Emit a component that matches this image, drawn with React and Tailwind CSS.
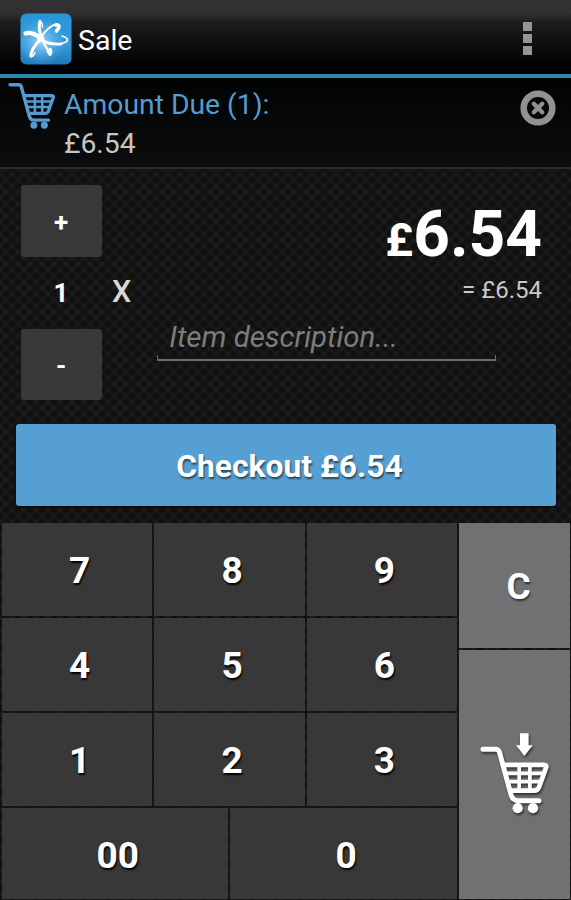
import React, { useState } from "react";

const DIGITS = ["7", "8", "9", "4", "5", "6", "1", "2", "3"];

function Cart({ className, arrow }) {
  return (
    <svg
      viewBox="480 732 70 83"
      className={className}
      fill="none"
      stroke="currentColor"
      strokeLinecap="round"
      strokeLinejoin="round"
    >
      <path
        d="M483 749.2h12.5q3 0 4 3l11.5 42.5q1.6 6 7 6h21"
        strokeWidth="5"
      />
      <path d="M504 764.8h40q3 0 2 3l-7 19.5q-1.2 3.4-5 3.4h-23" strokeWidth="4.8" />
      <path d="M507 773.4h36M509 781.6h32M519.2 766v24M529.9 766v24" strokeWidth="3.7" />
      <circle cx="517.7" cy="808.2" r="5.1" fill="currentColor" stroke="none" />
      <circle cx="533" cy="808.2" r="5.1" fill="currentColor" stroke="none" />
      {arrow && (
        <path
          d="M520 733.3h8.6v11.9h4.1L524.4 756l-8.4-10.8h4z"
          fill="currentColor"
          stroke="none"
        />
      )}
    </svg>
  );
}

function Logo() {
  return (
    <svg viewBox="0 0 52 52" className="h-[52px] w-[52px]">
      <defs>
        <linearGradient id="sky" x1="0" y1="0" x2="0" y2="1">
          <stop offset="0" stopColor="#2596d6" />
          <stop offset="0.6" stopColor="#3a9bdc" />
          <stop offset="1" stopColor="#1c78b8" />
        </linearGradient>
        <radialGradient id="glow" cx="0.4" cy="0.55" r="0.48">
          <stop offset="0" stopColor="#a3d3f3" />
          <stop offset="1" stopColor="#4fb0e8" stopOpacity="0" />
        </radialGradient>
      </defs>
      <rect x="0.5" y="0.5" width="51" height="51" rx="6" fill="url(#sky)" />
      <rect x="0.5" y="0.5" width="51" height="51" rx="6" fill="url(#glow)" />
      <g fill="none" stroke="#fff" strokeLinecap="round" strokeLinejoin="round">
        <path d="M5.5 20.5C10 18.5 15 21 21 25" strokeWidth="4.2" />
        <path d="M21 27C29 33 40 32 46 29C49 27 47 24 42 23" strokeWidth="1.7" />
        <path d="M20 26C27 31 33 31.5 41 31" strokeWidth="2.8" />
        <path d="M19.8 8.5C18.5 15 20 21 22 26" strokeWidth="3" />
        <path d="M20 8.5C21.5 9 22.5 11 22.5 14" strokeWidth="1.5" />
        <path d="M22 26C24 31 27 36 30 41" strokeWidth="2.2" />
        <path d="M28 38.5L30 41.5C31.5 40 31 38 30 36" strokeWidth="3" />
        <path d="M20.5 25C25 18 31 12 37 11" strokeWidth="1.8" />
        <path d="M36 12C40.500 11.500 39.500 14.500 36.500 18" strokeWidth="3.6" />
        <path d="M20.5 26C15 32 10.500 38 11 43" strokeWidth="3.2" />
        <path d="M11 43.5C13 44 14 42 15 39.5" strokeWidth="1.5" />
      </g>
      <circle cx="20.8" cy="25.5" r="3.6" fill="#fff" />
    </svg>
  );
}

function Key({ children, className = "", onClick }) {
  return (
    <button
      onClick={onClick}
      className={`flex items-center justify-center bg-[#383838] pt-[3px] pl-[5px] text-[37px] leading-none font-bold [text-shadow:1px_2px_2px_#000] ${className}`}
    >
      {children}
    </button>
  );
}

export default function App() {
  const [pence, setPence] = useState(654);
  const [qty, setQty] = useState(1);

  const price = (pence / 100).toFixed(2);
  const total = ((pence * qty) / 100).toFixed(2);

  const press = (d) => setPence(Number(`${pence}${d}`) % 10000000);

  return (
    <div className="flex h-[900px] w-[571px] flex-col overflow-hidden bg-[#1c1c1c] bg-[radial-gradient(#101010_25%,transparent_60%),radial-gradient(#101010_25%,transparent_60%)] bg-[length:12px_12px] bg-[position:0_0,6px_6px] font-[Roboto,'Liberation_Sans',sans-serif] text-white">
      <header className="flex h-[78px] shrink-0 items-center border-b-4 border-[#2c84a8] bg-[linear-gradient(#343434_0%,#303030_18%,#1d1d1d_30%,#000_90%)] pl-5">
        <div className="pt-1">
          <Logo />
        </div>
        <h1 className="ml-[6px] pt-[8px] text-[28.5px] leading-none">Sale</h1>
        <button className="mr-[39px] ml-auto flex flex-col gap-[3px] pt-[2px]">
          <span className="h-[9px] w-[9px] bg-[#959595]" />
          <span className="h-[9px] w-[9px] bg-[#959595]" />
          <span className="h-[9px] w-[9px] bg-[#959595]" />
        </button>
      </header>

      <section className="flex h-[91px] shrink-0 items-start border-b-2 border-[#2b2b2b] bg-[linear-gradient(#020303,#0b0c0e)] pl-2">
        <Cart className="-mt-[5px] h-[57px] w-[48px] text-[#559bd0]" />
        <div className="ml-2 pt-[7px] text-[28.3px] leading-[39px]">
          <p className="text-[#559bd0]">Amount Due (1):</p>
          <p className="text-[#c8c6c3]">£{total}</p>
        </div>
        <button className="mt-3 mr-[15px] ml-auto" onClick={() => setPence(0)}>
          <svg viewBox="0 0 36 36" className="h-9 w-9" fill="none" stroke="#919191">
            <circle cx="18" cy="18" r="14.3" strokeWidth="6.6" />
            <path d="M13.8 13.8l8.4 8.4M22.2 13.8l-8.4 8.4" strokeWidth="4.4" strokeLinecap="round" />
          </svg>
        </button>
      </section>

      <main className="flex h-[255px] shrink-0 pt-4 pr-[30px] pl-[21px]">
        <div className="flex w-[81px] flex-col items-center text-[26px] font-bold">
          <button className="h-[72px] w-full rounded-[3px] bg-[#383838] pt-[3px] pr-px" onClick={() => setQty(qty + 1)}>
            +
          </button>
          <span className="flex h-[72px] items-center pr-px">{qty}</span>
          <button
            className="h-[71px] w-full rounded-[3px] bg-[#383838] pt-[3px] pr-px"
            onClick={() => setQty(Math.max(1, qty - 1))}
          >
            -
          </button>
        </div>
        <span className="ml-[10px] pt-[91px] text-[30.5px] leading-8 font-medium text-[#d8d8d8]">X</span>
        <div className="flex grow flex-col">
          <p className="-mr-px mt-[17px] text-right text-[64px] leading-[66px] font-bold">
            <span className="text-[47px]">£</span>
            {price}
          </p>
          <p className="-mr-px mt-[3px] text-right text-[24px] leading-7 text-[#c8c8c8]">= £{total}</p>
          <div className="mt-[15px] ml-[26px] w-[339px]">
            <input
              placeholder="Item description..."
              className="block h-9 w-full bg-transparent px-[12px] text-[29.4px] italic outline-none placeholder:text-[#7d7d7d]"
            />
            <div className="h-[6px] border-x-[1.5px] border-b-2 border-[#6c6c6c]" />
          </div>
        </div>
      </main>

      <button className="mr-[15px] ml-4 h-[82px] shrink-0 rounded-[3px] bg-[#559fd3] pt-[3px] pl-[7px] text-[31.8px] font-bold shadow-[0_1px_2px_#000] [text-shadow:1px_2px_2px_#2a4659]">
        Checkout £{total}
      </button>

      <div className="mt-[17px] flex h-[376px] shrink-0 gap-[2px] pr-px pl-[2px]">
        <div className="grid w-[455px] grid-cols-6 grid-rows-[92.5px_92.5px_92.5px_1fr] gap-x-[2px] gap-y-[2.5px]">
          {DIGITS.map((d) => (
            <Key key={d} className="col-span-2" onClick={() => press(d)}>
              {d}
            </Key>
          ))}
          <Key className="col-span-3" onClick={() => press("00")}>
            00
          </Key>
          <Key className="col-span-3" onClick={() => press("0")}>
            0
          </Key>
        </div>
        <div className="flex grow flex-col gap-[2.5px]">
          <button
            onClick={() => setPence(0)}
            className="h-[124.5px] bg-[#717173] pt-[3px] pl-[8px] text-[37px] font-bold [text-shadow:1px_2px_2px_#333]"
          >
            C
          </button>
          <button className="flex grow justify-center bg-[#717173] pt-[82px]">
            <Cart arrow className="h-[83px] w-[70px] drop-shadow-[1px_2px_1px_#333]" />
          </button>
        </div>
      </div>
    </div>
  );
}
